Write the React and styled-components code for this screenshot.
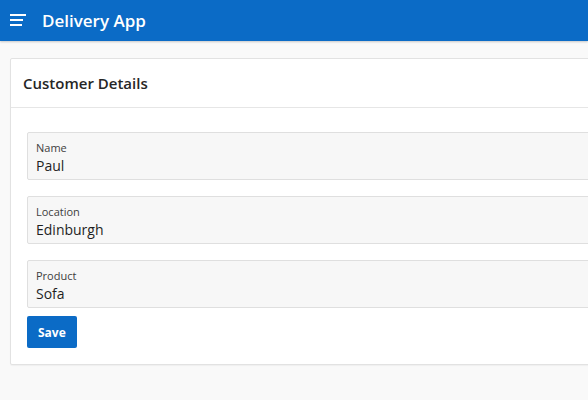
import styled, { createGlobalStyle } from "styled-components";

const GlobalStyle = createGlobalStyle`
  body {
    margin: 0;
    background: #f9f9f9;
    font-family: "Open Sans", "Noto Sans", sans-serif;
    color: #262626;
  }
`;

const Page = styled.div`
  width: 588px;
  height: 400px;
  overflow: hidden;
`;

const Header = styled.header`
  display: flex;
  align-items: center;
  gap: 14px;
  height: 41px;
  padding: 0 10px;
  background: #0b6bc6;
  box-shadow: 0 1px 2px rgba(0, 0, 0, 0.2);
  color: #fff;
`;

const MenuButton = styled.span`
  display: flex;
  width: 18px;
  height: 18px;
`;

const AppTitle = styled.h1`
  margin: 0;
  font-size: 17px;
  font-weight: 600;
`;

const Main = styled.main`
  padding: 17px 0 0 10px;
`;

const Card = styled.section`
  width: 600px;
  background: #fff;
  border: 1px solid #e2e2e2;
  border-radius: 2px;
  box-shadow: 0 1px 1px rgba(0, 0, 0, 0.04);
`;

const CardHeader = styled.div`
  display: flex;
  align-items: center;
  height: 48px;
  padding: 0 12px;
  border-bottom: 1px solid #e6e6e6;
`;

const CardTitle = styled.h2`
  margin: 0;
  font-size: 15px;
  font-weight: 600;
  color: #262626;
`;

const CardBody = styled.div`
  display: flex;
  flex-direction: column;
  gap: 16px;
  padding: 24px 16px 16px 16px;
`;

const Field = styled.div`
  display: flex;
  flex-direction: column;
  height: 46px;
  padding: 0 8px;
  background: #f7f7f7;
  border: 1px solid #dfdfdf;
  border-radius: 2px;
`;

const Label = styled.label`
  margin-top: 8px;
  font-size: 11px;
  line-height: 14px;
  color: #404040;
`;

const Value = styled.span`
  margin-top: 2px;
  font-size: 14px;
  line-height: 18px;
  color: #1f1f1f;
`;

const Actions = styled.div`
  margin-top: -8px;
`;

const SaveButton = styled.button`
  height: 32px;
  padding: 0 11px;
  background: #0b6bc6;
  border: none;
  border-radius: 2px;
  color: #fff;
  font-family: inherit;
  font-size: 12px;
  font-weight: 700;
  cursor: pointer;
`;

const fields = [
  { label: "Name", value: "Paul" },
  { label: "Location", value: "Edinburgh" },
  { label: "Product", value: "Sofa" },
];

export default function App() {
  return (
    <Page>
      <GlobalStyle />
      <Header>
        <MenuButton>
          <svg width="18" height="18" viewBox="0 0 18 18">
            <g stroke="#fff" strokeWidth="2">
              <line x1="0" y1="3" x2="16" y2="3" />
              <line x1="0" y1="8" x2="13" y2="8" />
              <line x1="0" y1="13" x2="12" y2="13" />
            </g>
          </svg>
        </MenuButton>
        <AppTitle>Delivery App</AppTitle>
      </Header>
      <Main>
        <Card>
          <CardHeader>
            <CardTitle>Customer Details</CardTitle>
          </CardHeader>
          <CardBody>
            {fields.map((f) => (
              <Field key={f.label}>
                <Label>{f.label}</Label>
                <Value>{f.value}</Value>
              </Field>
            ))}
            <Actions>
              <SaveButton>Save</SaveButton>
            </Actions>
          </CardBody>
        </Card>
      </Main>
    </Page>
  );
}
